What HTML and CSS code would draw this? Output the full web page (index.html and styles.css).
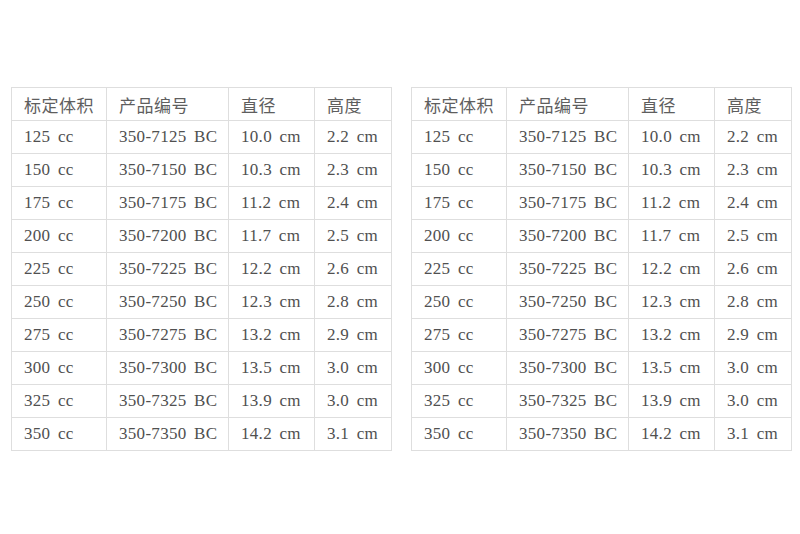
FILE: index.html
```html
<!DOCTYPE html>
<html lang="zh">
<head>
<meta charset="utf-8">
<title>规格表</title>
<link rel="stylesheet" href="styles.css">
</head>
<body>
<div class="page">
  <table class="spec">
    <colgroup><col class="c1"><col class="c2"><col class="c3"><col class="c4"></colgroup>
    <thead>
      <tr><th>标定体积</th><th>产品编号</th><th>直径</th><th>高度</th></tr>
    </thead>
    <tbody>
      <tr><td>125 cc</td><td>350-7125 BC</td><td>10.0 cm</td><td>2.2 cm</td></tr>
      <tr><td>150 cc</td><td>350-7150 BC</td><td>10.3 cm</td><td>2.3 cm</td></tr>
      <tr><td>175 cc</td><td>350-7175 BC</td><td>11.2 cm</td><td>2.4 cm</td></tr>
      <tr><td>200 cc</td><td>350-7200 BC</td><td>11.7 cm</td><td>2.5 cm</td></tr>
      <tr><td>225 cc</td><td>350-7225 BC</td><td>12.2 cm</td><td>2.6 cm</td></tr>
      <tr><td>250 cc</td><td>350-7250 BC</td><td>12.3 cm</td><td>2.8 cm</td></tr>
      <tr><td>275 cc</td><td>350-7275 BC</td><td>13.2 cm</td><td>2.9 cm</td></tr>
      <tr><td>300 cc</td><td>350-7300 BC</td><td>13.5 cm</td><td>3.0 cm</td></tr>
      <tr><td>325 cc</td><td>350-7325 BC</td><td>13.9 cm</td><td>3.0 cm</td></tr>
      <tr><td>350 cc</td><td>350-7350 BC</td><td>14.2 cm</td><td>3.1 cm</td></tr>
    </tbody>
  </table>
  <table class="spec">
    <colgroup><col class="c1"><col class="c2"><col class="c3"><col class="c4"></colgroup>
    <thead>
      <tr><th>标定体积</th><th>产品编号</th><th>直径</th><th>高度</th></tr>
    </thead>
    <tbody>
      <tr><td>125 cc</td><td>350-7125 BC</td><td>10.0 cm</td><td>2.2 cm</td></tr>
      <tr><td>150 cc</td><td>350-7150 BC</td><td>10.3 cm</td><td>2.3 cm</td></tr>
      <tr><td>175 cc</td><td>350-7175 BC</td><td>11.2 cm</td><td>2.4 cm</td></tr>
      <tr><td>200 cc</td><td>350-7200 BC</td><td>11.7 cm</td><td>2.5 cm</td></tr>
      <tr><td>225 cc</td><td>350-7225 BC</td><td>12.2 cm</td><td>2.6 cm</td></tr>
      <tr><td>250 cc</td><td>350-7250 BC</td><td>12.3 cm</td><td>2.8 cm</td></tr>
      <tr><td>275 cc</td><td>350-7275 BC</td><td>13.2 cm</td><td>2.9 cm</td></tr>
      <tr><td>300 cc</td><td>350-7300 BC</td><td>13.5 cm</td><td>3.0 cm</td></tr>
      <tr><td>325 cc</td><td>350-7325 BC</td><td>13.9 cm</td><td>3.0 cm</td></tr>
      <tr><td>350 cc</td><td>350-7350 BC</td><td>14.2 cm</td><td>3.1 cm</td></tr>
    </tbody>
  </table>
</div>
</body>
</html>
```
FILE: styles.css
```css
html, body {
  margin: 0;
  padding: 0;
  background: #ffffff;
}

.page {
  display: flex;
  align-items: flex-start;
  gap: 19px;
  padding: 87px 0 0 11px;
}

.spec {
  border-collapse: collapse;
  table-layout: fixed;
  width: 380px;
  color: #555555;
}

.spec .c1 { width: 95px; }
.spec .c2 { width: 122px; }
.spec .c3 { width: 86px; }
.spec .c4 { width: 77px; }

.spec tr {
  height: 33px;
}

.spec th,
.spec td {
  border: 1px solid #dedede;
  padding: 0 0 0 12px;
  text-align: left;
  vertical-align: middle;
  white-space: nowrap;
  overflow: hidden;
}

.spec th {
  font-family: "Noto Sans CJK SC", sans-serif;
  font-weight: 400;
  font-size: 17px;
  letter-spacing: 0.5px;
  color: #5e5e5e;
}

.spec td {
  font-family: "Liberation Serif", serif;
  font-size: 17px;
  letter-spacing: 0.3px;
  word-spacing: 3px;
  color: #505050;
}
```
